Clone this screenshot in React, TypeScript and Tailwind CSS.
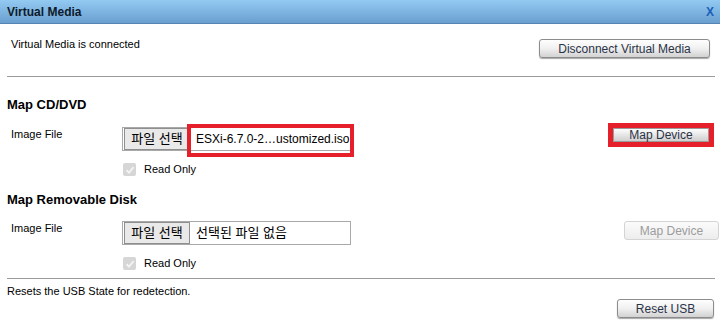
import React from 'react';

const FONT = "font-['Liberation_Sans','Noto_Sans_CJK_KR',Arial,sans-serif]";

const Button: React.FC<{ label: string; className?: string; disabled?: boolean }> = ({ label, className = '', disabled }) => (
  <div
    className={`flex items-center justify-center rounded-[3px] border text-[12px] leading-none ${
      disabled
        ? 'border-[#d4d4d4] bg-gradient-to-b from-[#fbfbfb] to-[#ededed] text-[#9c9c9c]'
        : 'border-[#8c8c8c] bg-gradient-to-b from-[#fefefe] via-[#f0f0f0] to-[#d2d2d2] text-[#2b3347] shadow-[0_1px_1px_rgba(0,0,0,0.35)]'
    } ${className}`}
  >
    {label}
  </div>
);

// korean labels render a bit larger than the latin file name
const FileInput: React.FC<{ fileName: string; highlight?: boolean; korean?: boolean }> = ({ fileName, highlight, korean }) => (
  <div className="relative flex h-[24px] w-[229px] shrink-0 items-center border border-[#a9a9a9] bg-white">
    <div className="ml-[1px] flex h-[22px] w-[66px] shrink-0 items-center justify-center border border-[#8f8f8f] bg-[#e9e9e9] text-[13px] text-black">
      파일 선택
    </div>
    <span className={`ml-[6px] whitespace-nowrap text-black ${korean ? 'text-[13px]' : 'text-[12px]'}`}>{fileName}</span>
    {highlight && (
      <span className="pointer-events-none absolute left-[64px] top-[-4px] h-[33px] w-[167px] border-[4px] border-[#e5202a]" />
    )}
  </div>
);

const ReadOnly: React.FC = () => (
  <div className="flex items-center">
    <span className="flex h-[13px] w-[13px] items-center justify-center rounded-[2px] bg-[#d6d6d6]">
      <svg width="10" height="10" viewBox="0 0 10 10">
        <path d="M1.5 5.2 L4 7.6 L8.6 2.2" fill="none" stroke="#f4f4f4" strokeWidth="1.8" />
      </svg>
    </span>
    <span className="ml-[8px] text-[11px] leading-[13px] text-black">Read Only</span>
  </div>
);

const App: React.FC = () => {
  return (
    <div className={`flex h-[324px] w-[720px] flex-col overflow-hidden bg-white ${FONT}`}>
      <div className="flex h-[24px] shrink-0 items-center justify-between border-b border-[#5585b5] bg-gradient-to-b from-[#93caf2] to-[#6a9fd0] pl-[7px] pr-[6px]">
        <span className="text-[12px] font-bold text-[#0d1a2a]">Virtual Media</span>
        <span className="text-[12px] font-bold text-[#1a5fb8]">X</span>
      </div>

      <div className="flex items-start justify-between pl-[11px] pr-[10px] pt-[14px]">
        <span className="text-[11px] leading-[13px] text-black">Virtual Media is connected</span>
        <Button label="Disconnect Virtual Media" className="mt-[1px] h-[19px] w-[171px]" />
      </div>

      <div className="ml-[7px] mr-[5px] mt-[18px] h-px bg-[#9b9b9b]" />

      <div className="mt-[20px] pl-[7px] text-[13px] font-bold leading-[15px] text-black">Map CD/DVD</div>
      <div className="mt-[15px] flex items-start pl-[11px] pr-[6px]">
        <span className="mt-[1px] w-[111px] text-[11px] leading-[13px] text-black">Image File</span>
        <FileInput fileName="ESXi-6.7.0-2…ustomized.iso" highlight />
        <div className="-mt-[4px] ml-auto flex h-[24px] w-[106px] items-center justify-center border-[5px] border-[#e5202a] bg-white">
          <div className="flex h-[14px] w-[96px] items-center justify-center border border-[#9a9a9a] bg-gradient-to-b from-[#fdfdfd] to-[#cfcfcf] text-[12px] text-[#2b3347]">
            Map Device
          </div>
        </div>
      </div>
      <div className="mt-[12px] pl-[123px]">
        <ReadOnly />
      </div>

      <div className="mt-[16px] pl-[7px] text-[13px] font-bold leading-[15px] text-black">Map Removable Disk</div>
      <div className="mt-[14px] flex items-start pl-[11px] pr-[1px]">
        <span className="mt-[1px] w-[111px] text-[11px] leading-[13px] text-black">Image File</span>
        <FileInput fileName="선택된 파일 없음" korean />
        <Button label="Map Device" disabled className="ml-auto h-[19px] w-[95px]" />
      </div>
      <div className="mt-[12px] pl-[123px]">
        <ReadOnly />
      </div>

      <div className="ml-[7px] mr-[5px] mt-[8px] h-px bg-[#9b9b9b]" />

      <div className="pl-[7px] pt-[6px] text-[11px] leading-[13px] text-black">Resets the USB State for redetection.</div>
      <div className="flex justify-end pr-[6px] pt-[1px]">
        <Button label="Reset USB" className="h-[19px] w-[97px]" />
      </div>
    </div>
  );
};

export default App;
